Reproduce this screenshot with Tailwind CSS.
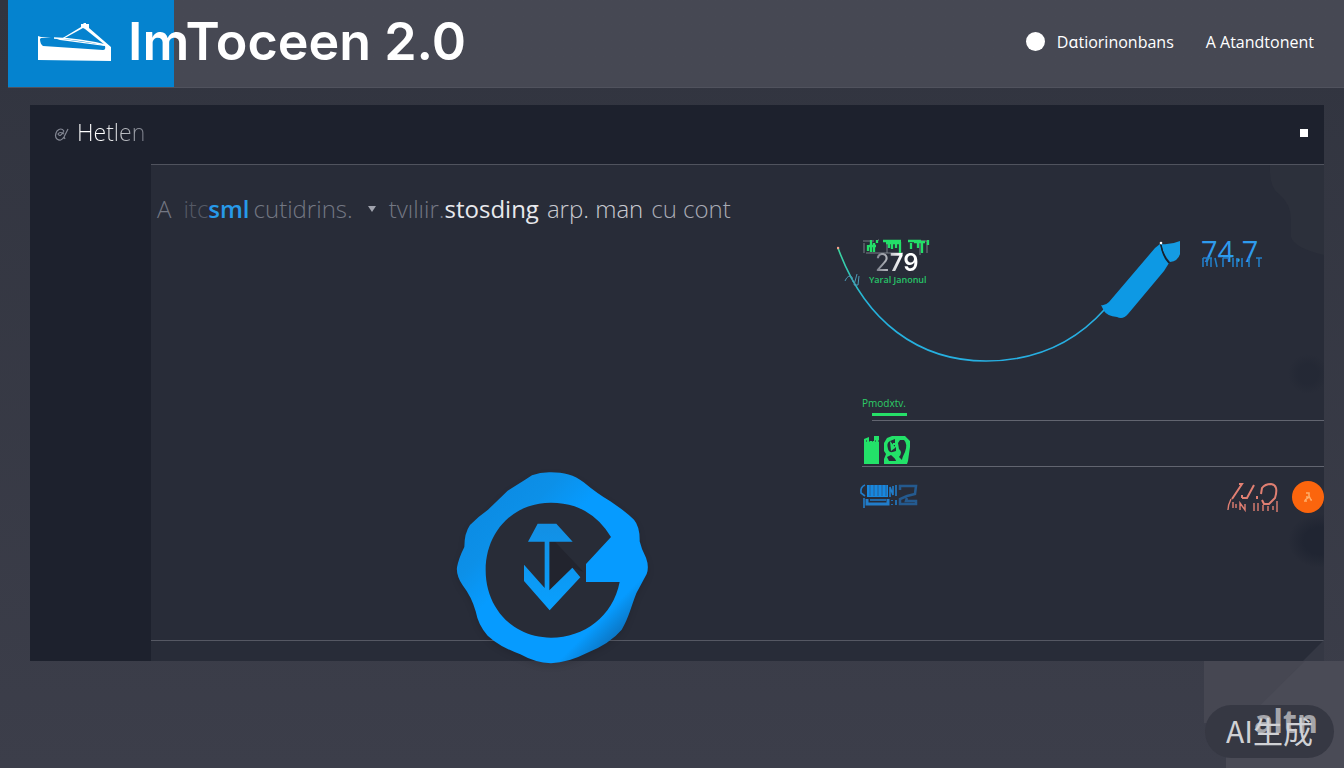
<!DOCTYPE html>
<html lang="en">
<head>
<meta charset="utf-8">
<meta name="viewport" content="width=device-width, initial-scale=1">
<title>ImToceen 2.0</title>
<script src="https://cdn.jsdelivr.net/npm/@tailwindcss/browser@4"></script>
</head>
<body class="relative flex min-h-screen flex-col overflow-x-hidden bg-linear-to-b from-[#31343f] to-[#3c3e4a] font-['Open_Sans','Noto_Sans_CJK_SC',sans-serif] text-white">
  <header class="ml-2 flex h-[88px] items-center border-b border-[#50525d] bg-[#464853] bg-linear-to-r from-[#0583cf] from-[166px] to-[#464853] to-[166px] pr-[30px] pb-1">
    <a href="#" class="flex items-center gap-3 pl-7 font-['Inter',sans-serif] text-[52px] leading-none font-semibold">
      <svg class="h-10 w-20" viewBox="0 0 78 40" fill="none" aria-hidden="true">
        <path d="M1 14 4 15 24 17 44 5 V2 h2 l1-1 h2 v1 h3 v4 L74 25 V39 L1 38Z" fill="#fff"/>
        <path d="M26 17 46 6 48 7 68 23Z" fill="#0583cf"/>
        <path d="M4 16 17 16 23 18 68 24 Q69 28 66 28 L6 24 Q3 22 3 17Z" fill="#0583cf"/>
        <path d="M17 16 Q44 17 68 23" stroke="#fff" stroke-width="1.3"/>
      </svg>
      <span>ImToceen 2.0</span>
    </a>
    <nav class="ml-auto flex items-center gap-8 text-base" aria-label="Main">
      <a href="#" class="flex items-center gap-3"><span class="size-[19px] rounded-full bg-white"></span>Dɑtiorinonbans</a>
      <a href="#">A Atandtonent</a>
    </nav>
  </header>

  <main class="relative mt-[17px] mr-5 ml-[30px] grid min-h-[556px] grid-cols-[121px_1fr] grid-rows-[59px_1fr] bg-[#1d212d]">
    <div class="col-span-2 flex items-center justify-between pr-4 pb-1 pl-6">
      <h1 class="flex items-center gap-2 text-[23px] font-light">
        <svg class="h-5 w-[15px]" viewBox="0 0 15 20" fill="none" stroke="#858995" stroke-width="1.2" aria-hidden="true"><path d="M10 8Q7 4 3 8Q0 13 3 16Q7 19 10 14L14 6M10 8Q6 15 4 11Q6 8 10 11M10 14L11 16"/></svg>
        <span class="bg-linear-to-r from-white from-40% to-[#777b86] bg-clip-text text-transparent">Hetlen</span>
      </h1>
      <button type="button" aria-label="Menu" class="size-2 bg-white"></button>
    </div>

    <section class="relative col-start-2 flex flex-col border-t border-[#50535e] bg-[#282c38]">
      <svg class="absolute top-0 right-0 h-full w-16" viewBox="0 0 64 496" preserveAspectRatio="none" aria-hidden="true">
        <defs><radialGradient id="spot"><stop offset=".5" stop-color="#202532"/><stop offset="1" stop-color="#202532" stop-opacity="0"/></radialGradient></defs>
        <path d="M10 0Q9 23 19 29Q31 39 31 55V72Q34 83 64 90V0Z" fill="#2c303b"/>
        <circle cx="48" cy="209" r="20" fill="url(#spot)" opacity=".5"/>
        <ellipse cx="60" cy="376" rx="32" ry="27" fill="url(#spot)"/>
        <path d="M64 475 43 496H64Z" fill="#353844"/>
      </svg>
      <h2 class="relative flex h-[70px] items-end pb-[10px] pl-[6px] text-2xl font-light whitespace-pre text-[#737783]"><span class="mr-3">A</span><span class="text-[#555965]">itc</span><span class="font-semibold text-[#279ae9]">sml</span><span class="ml-1">cutidrins.</span><svg class="mx-2 mb-3 h-2 w-5" viewBox="0 0 20 8" aria-hidden="true"><path d="M7 1h8L11 7Z" fill="#a0a3ad"/></svg><span>tvılıir.</span><span class="font-normal text-[#e8e9ed]">stosding</span><span class="ml-2 text-[#c8cad1]">arp. man</span><span class="ml-2 text-[#a8abb5]">cu cont</span></h2>

      <div class="relative ml-auto flex w-[487px] max-w-full grow flex-col">
        <figure class="relative h-[148px]">
          <svg class="h-[148px] w-full" viewBox="0 0 487 148" preserveAspectRatio="xMinYMin meet" fill="none" aria-label="Gauge">
            <defs><linearGradient id="arc" x1="0" y1="0" x2="1" y2="1"><stop stop-color="#3cd69b"/><stop offset=".3" stop-color="#24b2dc"/><stop offset="1" stop-color="#27aee4"/></linearGradient></defs>
            <path d="M1 13C28 87 82 126 149 126C192 126 234 112 268 74" stroke="url(#arc)" stroke-width="1.6"/>
            <circle cx="1" cy="13" r="1.3" fill="#f4a08b"/>
            <path d="M264 70Q268 71 272 67L318 13 323 9Q325 20 332 28L327 36 291 79Q286 85 280 82Q270 81 267 76Z" fill="#0d99e4"/>
            <path d="M324 9Q334 10 343 6V19Q341 26 333 27Q327 21 324 9Z" fill="#149be3"/>
            <path d="M324 10Q326 22 332 28" stroke="#15202d" stroke-width="1.5"/>
            <circle cx="324" cy="8" r="1.3" fill="#fff"/>
            <path d="M27 8V18M26 6H37M41 5H42M29 18H66M50 18V9M46 6H63M71 6H92M83 7V20M90 6V18" stroke="#8d949d" stroke-width=".8"/>
            <path d="M31 10V16M34 5V17M37 8V17M40 5V8M46 6H64M49 8H62M52 7V13M55 7V14M59 8V13M63 7V18M71 6H84M74 8V14M77 7H88M85 6V18M91 5V10M32 11H39M81 7V13" stroke="#23df68" stroke-width="2.3"/>
            <path d="M8 46Q11 39 15 42L16 47M20 39 17 50H21L22 41" stroke="#4c98b5"/>
          </svg>
          <span class="absolute top-4 left-[38px] bg-linear-to-r from-[#777b86] to-white to-60% bg-clip-text font-['Inter',sans-serif] text-2xl leading-6 text-transparent">2<b class="font-semibold">79</b></span>
          <span class="absolute top-[39px] left-8 text-[9px] leading-3 font-semibold text-[#27c568]">Yaral Janonul</span>
          <span class="absolute top-0 left-[364px] font-['Open_Sans',sans-serif] text-[29px] leading-8 text-[#2e9bed]">74.7</span>
          <svg class="absolute top-[22px] left-[364px] h-3 w-[62px]" viewBox="0 0 62 12" fill="none" stroke="#227ec5" stroke-width="1.6" aria-hidden="true"><path d="M2 1V10M2 1H11M6 1V9M10 1V10M14 1 16 10M22 1V10M22 1H28M32 1V10M36 1V10M41 1V10M48 1V10M55 1H61M58 1V10"/></svg>
        </figure>

        <div class="ml-[25px]">
          <div class="flex h-[38px] flex-col justify-end">
            <p class="text-[10px] leading-3 text-[#2dcc67]">Pmodxtv.</p>
            <div class="ml-[10px] border-b border-[#626570] pt-1 pb-1"><span class="block h-[3px] w-[35px] bg-[#26df68]"></span></div>
          </div>
          <div class="flex h-[46px] items-center border-b border-[#626570] pt-3 text-[#23e269]">
            <svg class="h-8 w-12" viewBox="0 0 48 32" role="img" aria-label="19">
              <path d="M2 5 7 3V7H12V2H17V30H2Z" fill="currentColor"/><path d="M1 7H17M1 4V27" stroke="#282c38" stroke-dasharray="1 2"/>
              <path d="M25 4 30 2H43L48 7V13L46 27 45 30H22V25L24 20 22 17V9Z" fill="currentColor"/>
              <path d="M28 7Q24 9 26 15Q27 20 34 17V14M28 7 33 5V14L29 17M38 6H42Q46 10 43 18Q40 24 40 26L37 23Q41 18 37 15L36 9ZM25 23 29 21Q34 25 34 27H27Z" fill="#282c38"/><path d="M31 9H33V11H31Z" fill="currentColor"/>
            </svg>
          </div>
          <div class="flex h-[60px] items-center">
            <svg class="-ml-1 h-7 w-[62px]" viewBox="0 0 62 28" fill="none" stroke="#217dca" stroke-width="1.6" role="img" aria-label="0:2">
              <path d="M7 2Q2 4 3 10L7 13M6 15V25"/><path d="M9 2H30V14H9Z" fill="#1788df" stroke="none"/><path d="M12 2V13M16 2V13M20 2V13M24 2V13M28 2V13" stroke="#295e94" stroke-width="1"/><path d="M9 16V21H30V16" stroke-width="3"/><path d="M12 17H28M32 14V4L35 12V3M34 17V18M34 21V22M38 2V13M38 17V22"/><path d="M42 7V3H58L57 11 49 13 42 16V21H58V18H48L49 15" stroke-width="2.5" stroke="#245a8f"/>
            </svg>
            <div class="ml-auto flex items-center gap-3 text-[#e07f72]">
              <svg class="h-8 w-[54px]" viewBox="0 0 54 32" fill="none" stroke="currentColor" stroke-width="2" role="img" aria-label="4.0"><path d="M13 3H16L6 18M28 4 21 17H16M16 14V17M31 15V18M35 13 36 7Q39 3 45 3Q53 4 49 17L43 23H38L36 19"/><path d="M5 18Q2 24 2 29M7 21V27M10 23V27M14 29V22L19 29V23M28 22V30M32 22V30M37 24V30M42 25V30M47 25V29M51 20V31" stroke-width="1.4"/></svg>
              <span class="flex size-8 items-center justify-center rounded-full bg-[#fb650d]"><svg class="h-3 w-3" viewBox="0 0 12 12" fill="none" stroke="#ffad68" stroke-width="1.5" aria-hidden="true"><path d="M4 2H7V6L3 9M2 10H5M7 5 9 9H10M5 5V7"/></svg></span>
            </div>
          </div>
        </div>
      </div>

      <div class="mt-auto h-[21px] border-t border-[#555863]"></div>

      <!-- Seal laid over the divider and the lower edge of the panel -->
      <svg class="absolute -bottom-[5px] left-[304px] h-[196px] w-[195px] overflow-visible drop-shadow-md" viewBox="45 30 585 588" role="img" aria-label="Download">
        <defs>
          <linearGradient id="seal" x1="0" y1="0" x2="1" y2="1"><stop stop-color="#0b87df"/><stop offset=".28" stop-color="#0c90e8"/><stop offset=".42" stop-color="#069bff"/><stop offset=".76" stop-color="#069bff"/><stop offset=".84" stop-color="#0b79c9"/><stop offset="1" stop-color="#0b9af9"/></linearGradient>
          <linearGradient id="arrow" x1="0" y1="0" x2="0" y2="1"><stop stop-color="#138fe3"/><stop offset="1" stop-color="#08a0ff"/></linearGradient>
        </defs>
        <path d="M333 37C372 37 402 45 431 67Q473 102 511 124Q552 151 582 179Q600 200 599 244Q604 267 618 293Q628 320 620 342L589 400C574 438 565 477 545 509Q511 550 439 580Q385 608 333 610Q285 608 241 583Q178 560 143 527Q115 497 107 454Q95 411 68 376Q48 346 51 322Q56 295 73 261Q73 219 90 195Q114 170 144 149L203 92Q246 66 276 46Q302 36 333 37Z" fill="url(#seal)"/>
        <path d="M513 231Q451 128 333 128C216 128 137 219 137 331C137 446 220 533 333 533C432 533 519 470 539 366H438V312Z" fill="#282c37"/>
        <path d="M345 245 430 335 397 323 330 392V245Z" fill="#22242e"/>
        <path d="M293 191H349L398 245H328V391L397 323 421 352 329 451 252 363V314L314 384V245H264Z" fill="url(#arrow)"/>
      </svg>
    </section>
  </main>

  <footer class="relative flex min-h-[107px] grow items-end justify-end pr-[10px] pb-[10px]">
    <svg class="absolute top-0 right-0 h-full w-[140px]" viewBox="0 0 140 107" preserveAspectRatio="none" aria-hidden="true"><path d="M0 0H140V107H22V62H0Z" fill="#464752"/><path d="M101 0H140V107H22V78Z" fill="#4a4b56"/></svg>
    <div class="relative flex h-[53px] w-[129px] items-center justify-center rounded-full bg-[#363843] pb-1 text-[30px] leading-none text-[#d0d1d5]">
      <span class="absolute top-0 right-4 text-[32px] leading-8 font-bold text-[#a4a5aa]" aria-hidden="true">altn</span>
      <span class="relative font-['Noto_Sans_CJK_SC',sans-serif]">AI生成</span>
    </div>
  </footer>
</body>
</html>
